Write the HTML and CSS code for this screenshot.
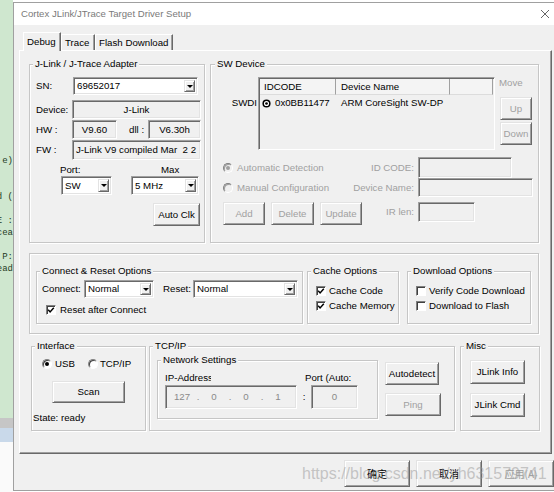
FILE: index.html
```html
<!DOCTYPE html>
<html>
<head>
<meta charset="utf-8">
<title>Cortex JLink/JTrace Target Driver Setup</title>
<link rel="stylesheet" href="styles.css">
</head>
<body>
<div class="desk">
  <div class="editor">
    <div class="ed-green">
      <div class="cl">e)</div>
      <div class="cl"> </div>
      <div class="cl"> </div>
      <div class="cl">ad (</div>
      <div class="cl"> </div>
      <div class="cl">SE :</div>
      <div class="cl">cea</div>
      <div class="cl"> </div>
      <div class="cl">P:</div>
      <div class="cl">ead</div>
    </div>
    <div class="ed-grey"></div>
    <div class="ed-blue"></div>
    <div class="ed-white"></div>
  </div>

  <div class="dialog">
    <div class="titlebar">
      <span class="title">Cortex JLink/JTrace Target Driver Setup</span>
      <svg class="close" viewBox="0 0 10 10"><path d="M1 1L9 9M9 1L1 9" stroke="#666" stroke-width="1" fill="none"/></svg>
    </div>

    <div class="dbody">
      <div class="tabs">
        <div class="tab sel t-debug">Debug</div>
        <div class="tab t-trace">Trace</div>
        <div class="tab t-flash">Flash Download</div>
      </div>

      <div class="panel">
        <div class="toprow">
          <fieldset class="grp jlink">
            <legend>J-Link / J-Trace Adapter</legend>
            <div class="jl-body">
              <div class="jrow r-sn"><span class="jlab">SN:</span><div class="combo c-sn"><span class="cv">69652017</span><span class="arr"></span></div></div>
              <div class="jrow r-dev"><span class="jlab">Device:</span><div class="field f-dev ctr">J-Link</div></div>
              <div class="jrow r-hw"><span class="jlab">HW :</span><div class="field f-hw ctr">V9.60</div><span class="dll">dll :</span><div class="field f-dll ctr">V6.30h</div></div>
              <div class="jrow r-fw"><span class="jlab">FW :</span><div class="field f-fw"><span class="fwt">J-Link V9 compiled Mar  2 2</span></div></div>
              <div class="jrow r-pm"><span class="l-port">Port:</span><span class="l-max">Max</span></div>
              <div class="jrow r-pmc"><div class="combo c-port"><span class="cv">SW</span><span class="arr"></span></div><div class="combo c-max"><span class="cv">5 MHz</span><span class="arr"></span></div></div>
              <div class="jrow r-auto"><div class="btn b-auto">Auto Clk</div></div>
            </div>
          </fieldset>

          <fieldset class="grp swdev">
            <legend>SW Device</legend>
            <div class="sw-body">
              <div class="sw-top">
                <div class="swdi">SWDI</div>
                <div class="list">
                  <div class="lhead"><div class="hc hc1">IDCODE</div><div class="hc hc2">Device Name</div><div class="hc hc3"></div></div>
                  <div class="lrow">
                    <div class="lc1"><svg class="tgt" viewBox="0 0 10 10"><circle cx="5" cy="5" r="3.7" fill="#fff" stroke="#000" stroke-width="1.7"/><circle cx="5" cy="5" r="1.5" fill="#000"/></svg><span>0x0BB11477</span></div>
                    <div class="lc2">ARM CoreSight SW-DP</div>
                  </div>
                </div>
                <div class="movecol">
                  <div class="movelab">Move</div>
                  <div class="btn dis b-up">Up</div>
                  <div class="btn dis b-down">Down</div>
                </div>
              </div>
              <div class="sw-cfg">
                <div class="opt o1"><span class="rad dis on"></span><span class="dtxt">Automatic Detection</span></div>
                <div class="clab c1">ID CODE:</div>
                <div class="field f-id"></div>
                <div class="opt o2"><span class="rad dis"></span><span class="dtxt">Manual Configuration</span></div>
                <div class="clab c2">Device Name:</div>
                <div class="field f-dn"></div>
                <div class="opt o3"><div class="btn dis b-add">Add</div><div class="btn dis b-del">Delete</div><div class="btn dis b-upd">Update</div></div>
                <div class="clab c3">IR len:</div>
                <div class="field f-ir"></div>
              </div>
            </div>
          </fieldset>
        </div>

        <div class="midframe">
          <fieldset class="grp conn">
            <legend>Connect &amp; Reset Options</legend>
            <div class="cr-body">
              <div class="cr-row1">
                <span class="l-conn">Connect:</span>
                <div class="combo c-conn"><span class="cv">Normal</span><span class="arr"></span></div>
                <span class="l-reset">Reset:</span>
                <div class="combo c-reset"><span class="cv">Normal</span><span class="arr"></span></div>
              </div>
              <div class="cbrow cr-row2"><span class="chk"><svg viewBox="0 0 8 8"><path d="M1.2 3.8L3.1 5.9L6.8 1.8" stroke="#000" stroke-width="1.5" fill="none"/></svg></span><span>Reset after Connect</span></div>
            </div>
          </fieldset>
          <fieldset class="grp cache">
            <legend>Cache Options</legend>
            <div class="opt-body">
              <div class="cbrow"><span class="chk"><svg viewBox="0 0 8 8"><path d="M1.2 3.8L3.1 5.9L6.8 1.8" stroke="#000" stroke-width="1.5" fill="none"/></svg></span><span>Cache Code</span></div>
              <div class="cbrow"><span class="chk"><svg viewBox="0 0 8 8"><path d="M1.2 3.8L3.1 5.9L6.8 1.8" stroke="#000" stroke-width="1.5" fill="none"/></svg></span><span>Cache Memory</span></div>
            </div>
          </fieldset>
          <fieldset class="grp dl">
            <legend>Download Options</legend>
            <div class="opt-body">
              <div class="cbrow"><span class="chk"></span><span class="nowrap">Verify Code Download</span></div>
              <div class="cbrow"><span class="chk"></span><span>Download to Flash</span></div>
            </div>
          </fieldset>
        </div>

        <div class="botrow">
          <fieldset class="grp iface">
            <legend>Interface</legend>
            <div class="if-body">
              <div class="if-row"><span class="rad on"></span><span class="t-usb">USB</span><span class="rad r-tcp"></span><span class="t-tcp">TCP/IP</span></div>
              <div class="btn b-scan">Scan</div>
              <div class="state">State: ready</div>
            </div>
          </fieldset>
          <fieldset class="grp tcp">
            <legend>TCP/IP</legend>
            <div class="tcp-body">
              <fieldset class="grp net">
                <legend>Network Settings</legend>
                <div class="net-body">
                  <div class="l-ip"><span>IP-Address:</span></div>
                  <div class="l-pt">Port (Auto:</div>
                  <div class="field f-ip"><span class="seg">127</span><span class="dot">.</span><span class="seg">0</span><span class="dot">.</span><span class="seg">0</span><span class="dot">.</span><span class="seg">1</span></div>
                  <div class="colon">:</div>
                  <div class="field f-pt ctr">0</div>
                </div>
              </fieldset>
              <div class="tcp-btns">
                <div class="btn b-autod">Autodetect</div>
                <div class="btn dis b-ping">Ping</div>
              </div>
            </div>
          </fieldset>
          <fieldset class="grp misc">
            <legend>Misc</legend>
            <div class="misc-body">
              <div class="btn b-jl">JLink Info</div>
              <div class="btn b-jl b-cmd">JLink Cmd</div>
            </div>
          </fieldset>
        </div>
      </div>

      <div class="dlgbtns">
        <div class="btn cjk">确定</div>
        <div class="btn cjk">取消</div>
        <div class="btn cjk dis">应用(A)</div>
      </div>
    </div>

    <div class="wm">https://blog.csdn.net/yh631579741</div>
  </div>
</div>
</body>
</html>
```

FILE: styles.css
```css
* { box-sizing: border-box; }
html, body { margin: 0; padding: 0; }
body {
  width: 554px; height: 492px; overflow: hidden; background: #fff;
  font-family: "Liberation Sans", Arial, sans-serif;
  font-size: 9.7px; line-height: 12px; color: #000;
}
.desk { display: flex; width: 554px; height: 492px; overflow: hidden; }

/* background editor strip */
.editor { width: 13px; flex: none; display: flex; flex-direction: column; overflow: hidden; }
.ed-green {
  height: 418px; background: #cfe7cf; display: flex; flex-direction: column; align-items: flex-end;
  padding-top: 155px; font-family: "Liberation Mono", monospace; font-size: 9px; line-height: 12px; color: #1f3b1f;
}
.cl { white-space: pre; height: 12px; flex: none; }
.ed-grey { height: 10px; background: #c6c6c6; }
.ed-blue { height: 14px; background: #c9d9ea; }
.ed-white { flex: 1; background: #fafafa; }

/* dialog window */
.dialog {
  flex: none; width: 545px; height: 489px; margin-top: 2px;
  border: 1px solid #a0a0a0; background: #f0f0f0; position: relative;
  display: flex; flex-direction: column;
}
.titlebar {
  height: 22px; flex: none; background: #fff; display: flex; align-items: center;
  justify-content: space-between; padding: 0 7px 0 7px;
}
.title { font-size: 9.6px; color: #7a7a7a; }
.close { width: 10px; height: 10px; }

.dbody { padding: 7px 5px 0 5px; display: flex; flex-direction: column; }

.tabs { display: flex; align-items: flex-end; height: 18px; padding-left: 4px; }
.tab {
  height: 16px; padding-left: 3px; display: flex; align-items: center; background: #f0f0f0;
  border-top: 1px solid #fff; border-left: 1px solid #fff; border-right: 1px solid #696969;
  box-shadow: inset -1px 0 0 #a0a0a0; white-space: nowrap;
}
.tab.sel { height: 19px; margin-bottom: -1px; position: relative; z-index: 2; }
.t-debug { width: 38px; }
.t-trace { width: 34px; }
.t-flash { width: 78px; }

.panel {
  width: 533px; height: 404px; border: 1px solid; border-color: #fff #696969 #696969 #fff;
  box-shadow: inset -1px -1px 0 #a0a0a0; padding: 7px 0 0 9px; display: flex; flex-direction: column;
}

/* group boxes */
.grp {
  margin: 0; padding: 0; border: 1px solid #c6c6c6; min-width: 0; flex: none;
  box-shadow: inset 1px 1px 0 #fff, 1px 1px 0 #fff;
}
.grp > legend { margin-left: 3px; padding: 0 2px; height: 12px; line-height: 12px; background: #f0f0f0; white-space: nowrap; }

/* widgets */
.combo {
  display: flex; align-items: center; background: #fff; padding: 1px 1px 1px 2px;
  border: 1px solid; border-color: #a0a0a0 #fff #fff #a0a0a0;
  box-shadow: inset 1px 1px 0 #696969, inset -1px -1px 0 #e3e3e3;
}
.cv { flex: 1; padding-left: 1px; white-space: nowrap; overflow: hidden; }
.arr {
  width: 11px; align-self: stretch; flex: none; background: #f0f0f0; margin: 1px 1px 1px 0;
  border: 1px solid; border-color: #e3e3e3 #696969 #696969 #e3e3e3;
  box-shadow: inset 1px 1px 0 #fff, inset -1px -1px 0 #a0a0a0;
  display: flex; align-items: center; justify-content: center;
}
.arr::after { content: ""; border-left: 3px solid transparent; border-right: 3px solid transparent; border-top: 3px solid #000; }
.field {
  display: flex; align-items: center; background: #f0f0f0; padding: 0 3px;
  border: 1px solid; border-color: #a0a0a0 #fff #fff #a0a0a0;
  box-shadow: inset 1px 1px 0 #696969, inset -1px -1px 0 #e3e3e3; overflow: hidden;
}
.field.ctr { justify-content: center; }
.btn {
  display: flex; align-items: center; justify-content: center; background: #f0f0f0; white-space: nowrap;
  border: 1px solid; border-color: #e3e3e3 #696969 #696969 #e3e3e3;
  box-shadow: inset 1px 1px 0 #fff, inset -1px -1px 0 #a0a0a0; flex: none;
}
.btn.dis { color: #a0a0a0; }
.rad {
  width: 10px; height: 10px; border-radius: 50%; flex: none; background: #fff;
  border: 1px solid; border-color: #808080 #fff #fff #808080; box-shadow: inset 1px 1px 0 #404040;
  display: flex; align-items: center; justify-content: center;
}
.rad.on::after { content: ""; width: 4px; height: 4px; border-radius: 50%; background: #000; }
.rad.dis { background: #f0f0f0; box-shadow: inset 1px 1px 0 #a0a0a0; }
.rad.dis.on::after { background: #a0a0a0; }
.chk {
  width: 10px; height: 10px; flex: none; background: #fff; display: flex; align-items: center; justify-content: center;
  border: 1px solid; border-color: #808080 #fff #fff #808080; box-shadow: inset 1px 1px 0 #404040;
}
.chk svg { width: 8px; height: 8px; }
.cbrow { display: flex; align-items: center; height: 15px; gap: 3px; white-space: nowrap; }
.nowrap { white-space: nowrap; }
.dtxt { color: #a0a0a0; white-space: nowrap; }

/* top row */
.toprow { display: flex; gap: 5px; }
.jlink { width: 176px; height: 185px; }
.swdev { width: 329px; height: 185px; }
.swdev > legend { margin-left: 4px; }

.jl-body { padding: 7px 0 0 6px; }
.jrow { display: flex; align-items: center; }
.jlab { width: 36px; flex: none; }
.r-sn { height: 18px; }
.c-sn { width: 125px; height: 18px; margin-left: 1px; }
.r-dev { margin-top: 5px; height: 19px; }
.f-dev { width: 129px; height: 19px; }
.r-hw { margin-top: 1px; height: 19px; }
.f-hw { width: 45px; height: 19px; }
.dll { margin-left: 12px; width: 19px; }
.f-dll { width: 53px; height: 19px; }
.r-fw { margin-top: 1px; height: 20px; }
.f-fw { width: 129px; height: 20px; }
.fwt { white-space: pre; }
.r-pm { margin-top: 4px; height: 12px; }
.l-port { margin-left: 24px; width: 101px; }
.r-pmc { height: 19px; }
.c-port { margin-left: 25px; width: 51px; height: 19px; }
.c-max { margin-left: 19px; width: 68px; height: 19px; }
.r-auto { margin-top: 8px; height: 23px; }
.b-auto { margin-left: 117px; width: 47px; height: 23px; }

.sw-body { padding: 7px 0 0 1px; }
.sw-top { display: flex; height: 73px; }
.swdi { width: 46px; flex: none; text-align: right; padding-right: 1px; margin-top: 20px; height: 12px; }
.list {
  width: 237px; height: 73px; flex: none; background: #f0f0f0; padding: 1px 0 0 1px;
  border: 1px solid; border-color: #a0a0a0 #fff #fff #a0a0a0; box-shadow: inset 1px 1px 0 #696969;
}
.lhead { display: flex; height: 16px; }
.hc { display: flex; align-items: center; border-right: 1px solid #a0a0a0; border-bottom: 1px solid #dcdcdc; background: #f4f4f4; }
.hc1 { width: 76px; padding-left: 4px; }
.hc2 { width: 114px; padding-left: 5px; }
.hc3 { width: 43px; }
.lrow { display: flex; height: 14px; margin-top: 1px; align-items: center; white-space: nowrap; }
.lc1 { width: 76px; display: flex; align-items: center; gap: 4px; padding-left: 2px; }
.tgt { width: 9px; height: 9px; flex: none; }
.lc2 { padding-left: 5px; }
.movecol { margin-left: 5px; width: 32px; display: flex; flex-direction: column; }
.movelab { height: 12px; margin-left: -1px; color: #a0a0a0; }
.b-up { margin-top: 8px; width: 32px; height: 23px; }
.b-down { margin-top: 2px; width: 32px; height: 23px; }

.sw-cfg {
  margin-top: 7px; display: grid; grid-template-columns: 133px 65px 115px; column-gap: 4px;
  grid-template-rows: 21px 24px 23px;
}
.opt { display: flex; align-items: center; padding-left: 11px; gap: 4px; }
.o2 { align-self: start; height: 19px; }
.o3 { gap: 6px; }
.clab { display: flex; align-items: center; justify-content: flex-end; color: #a0a0a0; white-space: nowrap; }
.c2 { align-self: start; height: 19px; }
.c3 { height: 20px; }
.f-id { width: 94px; height: 21px; }
.f-dn { width: 115px; height: 19px; }
.f-ir { width: 57px; height: 20px; }
.b-add { width: 42px; height: 23px; }
.b-del { width: 43px; height: 23px; }
.b-upd { width: 42px; height: 23px; }

/* middle frame */
.midframe {
  margin-top: 10px; width: 510px; height: 81px; border: 1px solid #c6c6c6; display: flex;
  padding: 11px 0 0 6px; box-shadow: inset 1px 1px 0 #fff, 1px 1px 0 #fff;
}
.conn { width: 267px; height: 59px; }
.cache { width: 92px; height: 59px; margin-left: 4px; }
.dl { width: 124px; height: 59px; margin-left: 8px; overflow: hidden; }
.cr-body { padding-top: 3px; }
.cr-row1 { display: flex; align-items: center; height: 18px; padding-left: 5px; }
.l-conn { width: 42px; flex: none; }
.c-conn { width: 70px; height: 18px; }
.l-reset { margin-left: 9px; width: 30px; flex: none; }
.c-reset { width: 105px; height: 18px; }
.cr-row2 { margin-top: 5px; height: 14px; padding-left: 9px; gap: 4px; }
.opt-body { padding: 6px 0 0 8px; }

/* bottom row */
.botrow { display: flex; margin-top: 6px; padding-left: 2px; }
.iface { width: 115px; height: 91px; }
.tcp { width: 306px; height: 91px; margin-left: 3px; }
.misc { width: 80px; height: 91px; margin-left: 5px; }
.if-body { padding: 6px 0 0 10px; }
.if-row { display: flex; align-items: center; height: 12px; }
.t-usb { margin-left: 3px; }
.r-tcp { margin-left: 13px; }
.t-tcp { margin-left: 2px; }
.b-scan { margin-top: 11px; margin-left: 10px; width: 73px; height: 22px; }
.state { margin-top: 9px; margin-left: -9px; height: 12px; }

.tcp-body { display: flex; padding: 2px 0 0 7px; }
.net { width: 221px; height: 65px; }
.net-body {
  padding: 6px 0 0 7px; display: grid; grid-template-columns: 132px 14px 47px; grid-template-rows: 13px 24px;
}
.l-ip { overflow: hidden; width: 46px; white-space: nowrap; }
.l-pt { grid-column: 2 / 4; padding-left: 8px; white-space: nowrap; }
.f-ip { height: 24px; color: #8a8a8a; padding-left: 4px; }
.seg { width: 24px; text-align: center; flex: none; }
.dot { width: 8px; text-align: center; flex: none; }
.colon { display: flex; align-items: center; justify-content: center; }
.f-pt { height: 24px; color: #8a8a8a; }
.tcp-btns { margin-left: 7px; display: flex; flex-direction: column; }
.b-autod { margin-top: 8px; width: 54px; height: 23px; }
.b-ping { margin-top: 8px; width: 56px; height: 23px; }

.misc-body { padding: 8px 0 0 9px; }
.b-jl { width: 55px; height: 24px; }
.b-cmd { margin-top: 9px; }

/* dialog buttons */
.dlgbtns { display: flex; justify-content: flex-end; gap: 6px; margin-top: 6px; margin-right: -2px; }
.cjk { width: 66px; height: 27px; font-family: "Noto Sans CJK SC", "Liberation Sans", sans-serif; font-size: 10px; }

.wm {
  position: absolute; left: 288px; top: 462px; font-size: 16px; line-height: 18px;
  color: rgba(150, 150, 150, 0.5); white-space: nowrap; pointer-events: none;
}
```
